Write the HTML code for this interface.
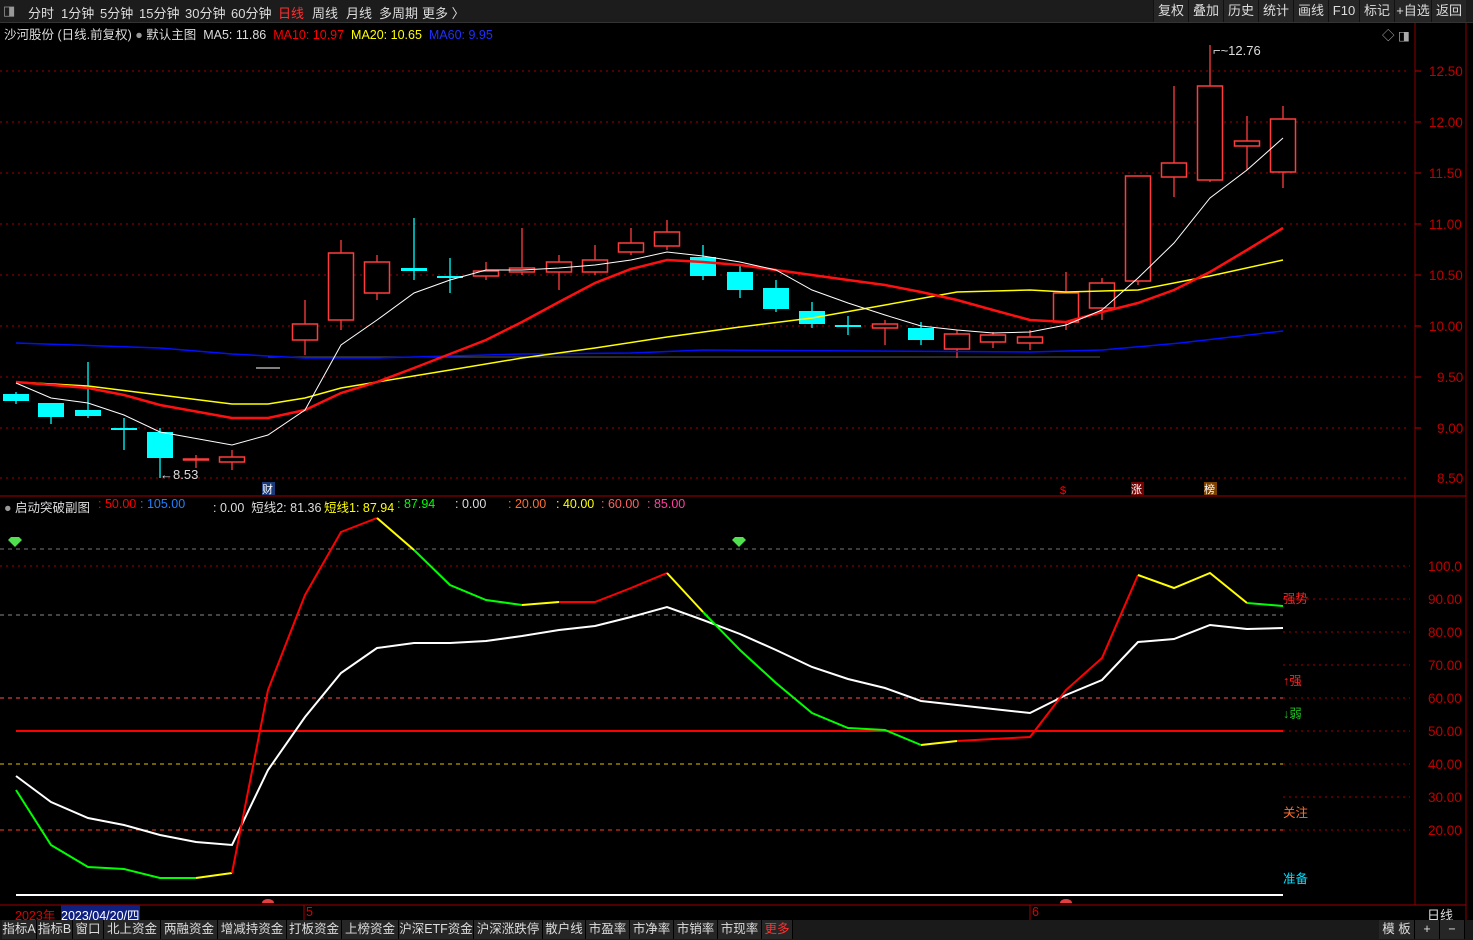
<!DOCTYPE html>
<html><head><meta charset="utf-8"><style>
body{margin:0;width:1473px;height:940px;background:#000;overflow:hidden;font-family:"Liberation Sans","Noto Sans CJK SC",sans-serif;font-size:12px;color:#ddd;position:relative}
.top{position:absolute;left:0;top:0;width:1473px;height:22px;background:#1c1c1c;border-bottom:1px solid #333}
.top span{position:absolute;top:3px;font-size:13px;color:#ddd}
.btn{position:absolute;top:0;height:22px;line-height:22px;background:#262626;border-left:1px solid #111;color:#ddd;font-size:13px;text-align:center}
.bar{position:absolute;left:0;top:920px;width:1473px;height:20px;background:#1a1a1a}
.bar span{position:absolute;top:0;height:19px;line-height:19px;background:#262626;color:#ddd;font-size:12.5px;text-align:center;border-right:1px solid #000}
.t{position:absolute;white-space:nowrap;font-size:12.5px}
.l{position:absolute;top:497px;white-space:nowrap;font-size:12.5px}
svg{position:absolute;left:0;top:0}
</style></head><body>
<div class="top">
<span style="left:3px;color:#999">◨</span>
<span style="left:28px">分时</span><span style="left:61px">1分钟</span><span style="left:100px">5分钟</span><span style="left:139px">15分钟</span><span style="left:185px">30分钟</span><span style="left:231px">60分钟</span><span style="left:278px;color:#ff3030">日线</span><span style="left:312px">周线</span><span style="left:346px">月线</span><span style="left:379px">多周期</span><span style="left:422px">更多 〉</span>
</div>
<div class="btn" style="left:1153px;width:34px">复权</div><div class="btn" style="left:1188px;width:34px">叠加</div><div class="btn" style="left:1223px;width:34px">历史</div><div class="btn" style="left:1258px;width:34px">统计</div><div class="btn" style="left:1293px;width:34px">画线</div><div class="btn" style="left:1328px;width:30px">F10</div><div class="btn" style="left:1359px;width:34px">标记</div><div class="btn" style="left:1394px;width:36px">+自选</div><div class="btn" style="left:1431px;width:34px">返回</div>

<svg width="1473" height="940" viewBox="0 0 1473 940" id="s">
<g stroke="#8b0000" stroke-width="1">
<line x1="1415" y1="23" x2="1415" y2="905"/><line x1="1466" y1="23" x2="1466" y2="920"/>
<line x1="0" y1="496" x2="1466" y2="496" stroke="#a00000"/><line x1="0" y1="905" x2="1466" y2="905" stroke="#a00000"/>
</g>
<g stroke="#a00000" stroke-dasharray="2,4">
<line x1="0" y1="71" x2="1410" y2="71"/><line x1="0" y1="122" x2="1410" y2="122"/><line x1="0" y1="173" x2="1410" y2="173"/><line x1="0" y1="224" x2="1410" y2="224"/><line x1="0" y1="275" x2="1410" y2="275"/><line x1="0" y1="326" x2="1410" y2="326"/><line x1="0" y1="377" x2="1410" y2="377"/><line x1="0" y1="428" x2="1410" y2="428"/><line x1="0" y1="478" x2="1410" y2="478"/>
<line x1="1283" y1="566" x2="1410" y2="566"/><line x1="1283" y1="599" x2="1410" y2="599"/><line x1="1283" y1="632" x2="1410" y2="632"/><line x1="1283" y1="665" x2="1410" y2="665"/><line x1="1283" y1="698" x2="1410" y2="698"/><line x1="1283" y1="731" x2="1410" y2="731"/><line x1="1283" y1="764" x2="1410" y2="764"/><line x1="1283" y1="797" x2="1410" y2="797"/><line x1="1283" y1="830" x2="1410" y2="830"/>
<line x1="0" y1="566" x2="1283" y2="566"/>
</g>
<g stroke-dasharray="4,4">
<line x1="0" y1="549" x2="1283" y2="549" stroke="#777"/>
<line x1="0" y1="615" x2="1283" y2="615" stroke="#888"/>
<line x1="0" y1="698" x2="1283" y2="698" stroke="#ff5050"/>
<line x1="0" y1="764" x2="1283" y2="764" stroke="#e0c000"/>
<line x1="0" y1="830" x2="1283" y2="830" stroke="#ff4020"/>
</g>
<line x1="16" y1="731" x2="1283" y2="731" stroke="#ff0000" stroke-width="2"/>
<line x1="16" y1="895" x2="1283" y2="895" stroke="#fff" stroke-width="2"/>
<g fill="#c00000" font-size="13.5"><text x="1429" y="76">12.50</text><text x="1429" y="127">12.00</text><text x="1429" y="178">11.50</text><text x="1429" y="229">11.00</text><text x="1429" y="280">10.50</text><text x="1429" y="331">10.00</text><text x="1437" y="382">9.50</text><text x="1437" y="433">9.00</text><text x="1437" y="483">8.50</text>
<text x="1428" y="571">100.0</text><text x="1428" y="604">90.00</text><text x="1428" y="637">80.00</text><text x="1428" y="670">70.00</text><text x="1428" y="703">60.00</text><text x="1428" y="736">50.00</text><text x="1428" y="769">40.00</text><text x="1428" y="802">30.00</text><text x="1428" y="835">20.00</text></g>
<g stroke="#c00000"><line x1="1415" y1="71" x2="1421" y2="71"/><line x1="1415" y1="122" x2="1421" y2="122"/><line x1="1415" y1="173" x2="1421" y2="173"/><line x1="1415" y1="224" x2="1421" y2="224"/><line x1="1415" y1="275" x2="1421" y2="275"/><line x1="1415" y1="326" x2="1421" y2="326"/><line x1="1415" y1="377" x2="1421" y2="377"/><line x1="1415" y1="428" x2="1421" y2="428"/></g>
<line x1="268" y1="357" x2="1100" y2="357" stroke="#555"/>
<g id="c"></g>
<polyline fill="none" stroke="#0010ff" stroke-width="1.5" points="16,343 160,348 232,354 305,358 377,358 450,356 522,354 631,353 703,350 1030,352 1102,350 1180,343 1283,331"/>
<polyline fill="none" stroke="#ffff00" stroke-width="1.5" points="16,382 88,386 160,395 232,404 268,404 305,398 341,388 377,382 450,370 522,358 595,348 667,337 740,327 812,318 885,305 957,292 1030,290 1066,292 1138,290 1210,276 1283,260"/>
<polyline fill="none" stroke="#ff1010" stroke-width="2.5" points="16,382 88,388 124,395 160,405 232,418 268,418 305,410 341,393 377,382 414,368 450,354 486,340 522,322 559,302 595,283 631,269 667,260 703,262 740,265 776,270 812,275 848,280 885,285 921,292 957,300 993,310 1030,320 1066,322 1102,312 1138,303 1174,290 1210,272 1247,250 1283,228"/>
<polyline fill="none" stroke="#fff" stroke-width="1" points="16,383 51,398 88,403 124,415 160,432 232,445 268,435 305,410 341,345 377,320 414,293 450,280 486,270 522,270 559,268 595,265 631,260 667,252 703,256 740,262 776,270 812,290 848,303 885,315 921,326 957,330 993,333 1030,332 1066,325 1102,310 1138,278 1174,243 1210,198 1247,170 1283,138"/>
<text x="160" y="479" fill="#ddd" font-size="13">←8.53</text>
<text x="1213" y="55" fill="#ddd" font-size="13">⌐~12.76</text>
<rect x="262" y="482" width="13" height="13" fill="#1a3a7a"/><text x="262" y="493" fill="#fff" font-size="11">财</text>
<text x="1060" y="494" fill="#f00" font-size="11">$</text>
<rect x="1131" y="482" width="13" height="13" fill="#700"/><text x="1131" y="493" fill="#fff" font-size="11">涨</text>
<rect x="1204" y="482" width="13" height="13" fill="#7a4000"/><text x="1204" y="493" fill="#fff" font-size="11">榜</text>
<polyline fill="none" stroke="#fff" stroke-width="2" points="16,776 51,802 88,818 124,825 160,835 196,842 232,845 268,770 305,717 341,673 377,648 414,643 450,643 486,641 522,636 559,630 595,626 631,617 667,607 703,620 740,634 776,650 812,667 848,679 885,688 921,701 957,705 993,709 1030,713 1066,695 1102,680 1138,642 1174,639 1210,625 1247,629 1283,628"/>
<g fill="none" stroke-width="2">
<polyline stroke="#00ff00" points="16,790 51,845 88,867 124,869 160,878 196,878"/>
<polyline stroke="#ffff00" points="196,878 232,873"/>
<polyline stroke="#ff0000" points="232,873 268,690 305,595 341,532 377,518"/>
<polyline stroke="#ffff00" points="377,518 414,550"/>
<polyline stroke="#00ff00" points="414,550 450,585 486,600 522,605"/>
<polyline stroke="#ffff00" points="522,605 559,602"/>
<polyline stroke="#ff0000" points="559,602 595,602 631,588 667,573"/>
<polyline stroke="#ffff00" points="667,573 703,612"/>
<polyline stroke="#00ff00" points="703,612 740,650 776,683 812,713 848,728 885,730 921,745"/>
<polyline stroke="#ffff00" points="921,745 957,741"/>
<polyline stroke="#ff0000" points="957,741 993,739 1030,737 1066,690 1102,658 1138,575"/>
<polyline stroke="#ffff00" points="1138,575 1174,588 1210,573 1247,603"/>
<polyline stroke="#00ff00" points="1247,603 1283,606"/>
</g>
<path d="M8,540 l3,-3 h8 l3,3 l-7,7z" fill="#50e050"/><path d="M732,540 l3,-3 h8 l3,3 l-7,7z" fill="#50e050"/>
<g font-size="12.5"><text x="1283" y="603" fill="#ff2020">强势</text><text x="1283" y="685" fill="#ff2020">↑强</text><text x="1283" y="718" fill="#20c020">↓弱</text><text x="1283" y="817" fill="#ff7030">关注</text><text x="1283" y="883" fill="#00e0ff">准备</text></g>
<path d="M262,903 a6,4 0 0 1 12,0z M1060,903 a6,4 0 0 1 12,0z" fill="#e04040"/>
<line x1="304" y1="905" x2="304" y2="920" stroke="#a00000"/><line x1="1030" y1="905" x2="1030" y2="920" stroke="#a00000"/>
</svg>
<div class="t" style="left:4px;top:24px">沙河股份 (日线.前复权) <span style="color:#999">●</span> 默认主图 &nbsp;MA5: 11.86 &nbsp;<span style="color:#f00">MA10: 10.97</span> &nbsp;<span style="color:#ff0">MA20: 10.65</span> &nbsp;<span style="color:#2030ff">MA60: 9.95</span></div>
<div class="t" style="left:1382px;top:25px;color:#aaa">◇ ◨</div>
<div class="l" style="left:4px"><span style="color:#999">●</span> 启动突破副图</div>
<div class="l" style="left:98px;color:#f00">: 50.00</div><div class="l" style="left:140px;color:#2080ff">: 105.00</div>
<div class="l" style="left:213px">: 0.00 &nbsp;短线2: 81.36</div><div class="l" style="left:324px;color:#ff0">短线1: 87.94</div><div class="l" style="left:397px;color:#0f0">: 87.94</div>
<div class="l" style="left:455px">: 0.00</div><div class="l" style="left:508px;color:#ff7030">: 20.00</div><div class="l" style="left:556px;color:#ff0">: 40.00</div><div class="l" style="left:601px;color:#ff6060">: 60.00</div><div class="l" style="left:647px;color:#ff40a0">: 85.00</div>
<div class="t" style="left:15px;top:905px;color:#d00">2023年</div>
<div class="t" style="left:61px;top:905px;background:#102080;color:#fff">2023/04/20/四</div>
<div class="t" style="left:306px;top:905px;color:#d00">5</div><div class="t" style="left:1032px;top:905px;color:#d00">6</div>
<div class="t" style="left:1427px;top:905px;color:#ddd;font-size:13px">日线</div>
<div class="bar">
<span style="left:2px;width:34px">指标A</span><span style="left:37px;width:35px">指标B</span><span style="left:73px;width:30px">窗口</span><span style="left:104px;width:56px">北上资金</span><span style="left:161px;width:56px">两融资金</span><span style="left:218px;width:68px">增减持资金</span><span style="left:287px;width:54px">打板资金</span><span style="left:342px;width:56px">上榜资金</span><span style="left:399px;width:74px">沪深ETF资金</span><span style="left:474px;width:68px">沪深涨跌停</span><span style="left:543px;width:42px">散户线</span><span style="left:586px;width:43px">市盈率</span><span style="left:630px;width:43px">市净率</span><span style="left:674px;width:43px">市销率</span><span style="left:718px;width:43px">市现率</span><span style="left:762px;width:30px;color:#ff3030">更多</span>
<span style="left:1379px;width:35px">模 板</span><span style="left:1415px;width:24px">+</span><span style="left:1440px;width:24px">−</span>
</div>
<script>
var d=[[16,394,401,392,404,'c'],[51,403,417,403,424,'c'],[88,410,416,362,418,'c'],[124,428,428,418,450,'c'],[160,432,458,428,478,'c'],[196,459,459,455,468,'r'],[232,457,462,450,470,'r'],[268,368,368,368,368,'w'],[305,324,340,300,355,'r'],[341,253,320,240,330,'r'],[377,262,293,255,300,'r'],[414,268,271,218,280,'c'],[450,276,276,258,293,'c'],[486,271,276,262,280,'r'],[522,268,272,228,275,'r'],[559,262,272,255,290,'r'],[595,260,272,245,275,'r'],[631,243,252,228,255,'r'],[667,232,246,220,250,'r'],[703,257,276,245,280,'c'],[740,272,290,265,298,'c'],[776,288,309,280,312,'c'],[812,311,324,302,328,'c'],[848,325,325,316,335,'c'],[885,324,328,320,345,'r'],[921,328,340,322,345,'c'],[957,334,349,330,358,'r'],[993,335,342,332,348,'r'],[1030,337,343,330,350,'r'],[1066,293,322,272,330,'r'],[1102,283,308,278,320,'r'],[1138,176,281,176,285,'r'],[1174,163,177,86,197,'r'],[1210,86,180,45,182,'r'],[1247,141,146,116,170,'r'],[1283,119,172,106,188,'r']];
var s='';d.forEach(function(a){var x=a[0],c=a[5];
if(c=='w'){s+='<line x1="'+(x-12)+'" y1="'+a[1]+'" x2="'+(x+12)+'" y2="'+a[1]+'" stroke="#fff"/>';return;}
var col=c=='c'?'#00ffff':'#ff3c3c';
s+='<line x1="'+x+'" y1="'+a[3]+'" x2="'+x+'" y2="'+a[4]+'" stroke="'+col+'" stroke-width="1.3"/>';
var h=Math.max(a[2]-a[1],1);
if(c=='c')s+='<rect x="'+(x-13)+'" y="'+a[1]+'" width="26" height="'+(h<2?2:h)+'" fill="#00ffff"/>';
else s+='<rect x="'+(x-12.5)+'" y="'+a[1]+'" width="25" height="'+h+'" fill="#000" stroke="#ff3c3c" stroke-width="1.5"/>';});
document.getElementById('c').innerHTML=s;
</script>
</body></html>
